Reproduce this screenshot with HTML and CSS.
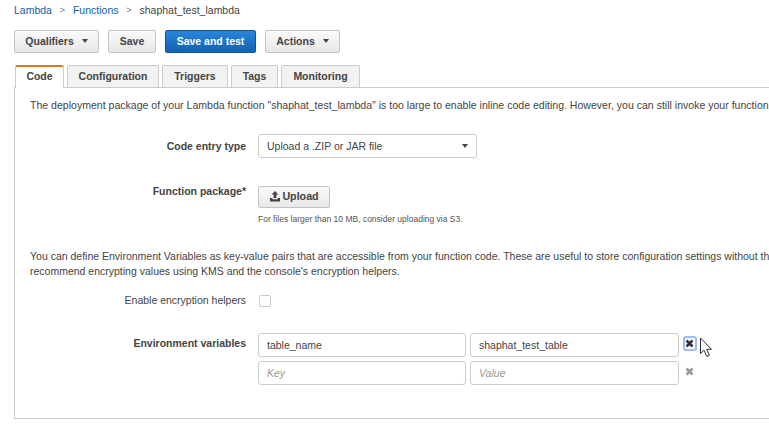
FILE: index.html
```html
<!DOCTYPE html>
<html>
<head>
    <meta charset="UTF-8">
    <title>shaphat_test_lambda</title>
    <link rel="stylesheet" href="styles.css">
</head>
<body>
    <div class="breadcrumb">
        <a href="#">Lambda</a>
        <span class="sep">&gt;</span>
        <a href="#">Functions</a>
        <span class="sep">&gt;</span>
        <span>shaphat_test_lambda</span>
    </div>

    <div class="toolbar">
        <button class="btn btn-qualifiers">Qualifiers <i class="caret"></i></button>
        <button class="btn btn-save">Save</button>
        <button class="btn btn-primary">Save and test</button>
        <button class="btn btn-actions">Actions <i class="caret"></i></button>
    </div>

    <div class="tabs">
        <div class="tab active tab-code">Code</div>
        <div class="tab tab-config">Configuration</div>
        <div class="tab tab-triggers">Triggers</div>
        <div class="tab tab-tags">Tags</div>
        <div class="tab tab-monitoring">Monitoring</div>
    </div>

    <div class="panel">
        <p class="note note-top">The deployment package of your Lambda function "shaphat_test_lambda" is too large to enable inline code editing. However, you can still invoke your function now.</p>

        <div class="row row-entry">
            <label class="label">Code entry type</label>
            <div class="select">
                <span>Upload a .ZIP or JAR file</span>
                <i class="caret"></i>
            </div>
        </div>

        <div class="row row-package">
            <label class="label">Function package*</label>
            <div>
                <button class="btn btn-upload">
                    <svg class="upload-icon" width="12" height="11" viewBox="0 0 12 11"><path d="M6 0 L9.5 3.6 H7.4 V7 H4.6 V3.6 H2.5 Z M1 7 H3.4 V8.2 H8.6 V7 H11 V10.5 H1 Z" fill="#444"/></svg>Upload
                </button>
                <div class="help">For files larger than 10 MB, consider uploading via S3.</div>
            </div>
        </div>

        <p class="note note-env">You can define Environment Variables as key-value pairs that are accessible from your function code. These are useful to store configuration settings without the need to change function code.<br>recommend encrypting values using KMS and the console's encryption helpers.</p>

        <div class="row row-helpers">
            <label class="label label-plain">Enable encryption helpers</label>
            <span class="checkbox"></span>
        </div>

        <div class="row row-env">
            <label class="label">Environment variables</label>
            <div class="env-grid">
                <input class="field" type="text" value="table_name">
                <input class="field" type="text" value="shaphat_test_table">
                <span class="remove focused">
                    <svg width="9" height="9" viewBox="0 0 9 9"><path d="M1.5 1.5 L7.5 7.5 M7.5 1.5 L1.5 7.5" stroke="#333" stroke-width="2.6"/></svg>
                </span>
                <input class="field" type="text" placeholder="Key">
                <input class="field" type="text" placeholder="Value">
                <span class="remove">
                    <svg width="9" height="9" viewBox="0 0 9 9"><path d="M1.5 1.5 L7.5 7.5 M7.5 1.5 L1.5 7.5" stroke="#999" stroke-width="2.6"/></svg>
                </span>
            </div>
        </div>
    </div>

    <!-- mouse pointer caught in the screenshot -->
    <svg class="pointer" width="14" height="21" viewBox="0 0 14 21"><path d="M1.5 1 V16.5 L5 13.2 L7.8 19.5 L10.4 18.3 L7.7 12.3 H12.5 Z" fill="#fff" stroke="#2b3040" stroke-width="1"/></svg>
</body>
</html>
```

FILE: styles.css
```css
html, body {
    height: 433px;
    overflow: hidden;
}

body {
    position: relative;
    margin: 0;
    font-family: "Liberation Sans", Arial, sans-serif;
    font-size: 10.5px;
    color: #444;
    background-color: #fff;
}

/* breadcrumb */
.breadcrumb {
    display: flex;
    align-items: center;
    height: 20px;
    padding-left: 14px;
    line-height: 20px;
    color: #444;
}

.breadcrumb a {
    color: #0f5ea8;
    text-decoration: none;
}

.sep {
    width: 21px;
    text-align: center;
    color: #777;
    font-size: 9px;
}

/* buttons */
.toolbar {
    display: flex;
    gap: 9px;
    margin-top: 10px;
    padding-left: 14px;
}

.btn {
    height: 23px;
    padding: 0 0 2px;
    border: 1px solid #c3c3c3;
    border-radius: 2px;
    background: linear-gradient(#fafafa, #e8e8e8);
    font-family: inherit;
    font-size: 10.5px;
    font-weight: bold;
    color: #444;
}

.btn-qualifiers { width: 85px; }
.btn-save { width: 48px; }
.btn-actions { width: 75px; }

.btn-primary {
    width: 91px;
    border-color: #15508f;
    background: linear-gradient(#2a86dc, #0f62b4);
    color: #fff;
}

.caret {
    display: inline-block;
    width: 0;
    height: 0;
    margin-left: 5px;
    border-left: 3.5px solid transparent;
    border-right: 3.5px solid transparent;
    border-top: 4px solid #444;
    vertical-align: 2px;
}

/* tabs */
.tabs {
    display: flex;
    gap: 3px;
    margin-top: 12px;
    padding-left: 15px;
}

.tab {
    height: 22px;
    box-sizing: border-box;
    border: 1px solid #ccc;
    border-bottom: none;
    border-radius: 2px 2px 0 0;
    background-color: #f2f2f2;
    text-align: center;
    font-weight: bold;
    line-height: 20px;
    color: #444;
}

.tab.active {
    position: relative;
    z-index: 1;
    margin-bottom: -1px;
    height: 23px;
    border-top: 2px solid #e47911;
    background-color: #fff;
    line-height: 19px;
}

.tab-code { width: 49px; }
.tab-config { width: 92px; }
.tab-triggers { width: 66px; }
.tab-tags { width: 47px; }
.tab-monitoring { width: 79px; }

/* main panel */
.panel {
    box-sizing: border-box;
    width: 800px;
    height: 332px;
    margin-left: 14px;
    border: 1px solid #ccc;
    padding: 0 15px;
}

.note {
    margin: 0;
    line-height: 15px;
    white-space: nowrap;
}

.note-top { padding-top: 10px; font-size: 10.55px; }
.note-env { padding-top: 24px; }

.row {
    display: flex;
    align-items: flex-start;
}

.label {
    flex: none;
    width: 228px;
    padding-right: 12px;
    box-sizing: border-box;
    text-align: right;
    font-weight: bold;
}

.label-plain { font-weight: normal; }

.row-entry { margin-top: 21px; }
.row-entry .label { line-height: 24px; }

.select {
    display: flex;
    align-items: center;
    justify-content: space-between;
    box-sizing: border-box;
    width: 219px;
    height: 24px;
    padding: 0 8px;
    border: 1px solid #ccc;
    border-radius: 3px;
}

.row-package { margin-top: 28px; }
.row-package .label { line-height: 11px; }

.btn-upload {
    display: flex;
    align-items: center;
    justify-content: center;
    width: 72px;
    height: 22px;
    font-size: 10.7px;
}

.upload-icon { margin-right: 1px; }

.help {
    margin-top: 5px;
    font-size: 8.5px;
    line-height: 12px;
    color: #555;
}

.row-helpers { margin-top: 14px; }
.row-helpers .label { line-height: 14px; }

.checkbox {
    width: 10px;
    height: 10px;
    margin: 2px 0 0 1px;
    border: 1px solid #ccc;
    border-radius: 2px;
}

.row-env { margin-top: 26px; }
.row-env .label { padding-top: 3px; line-height: 14px; }

.env-grid {
    display: grid;
    grid-template-columns: 208px 209px 18px;
    grid-auto-rows: 24px;
    gap: 4px;
}

.field {
    box-sizing: border-box;
    width: 100%;
    height: 24px;
    padding: 0 8px;
    border: 1px solid #ccc;
    border-radius: 3px;
    font-family: inherit;
    font-size: 10.5px;
    color: #444;
}

.field::placeholder {
    font-style: italic;
    color: #999;
}

.remove {
    display: flex;
    align-items: center;
    justify-content: center;
    width: 14px;
    height: 15px;
    box-sizing: border-box;
    margin-top: 3px;
    padding-right: 1px;
}

.remove.focused {
    border: 2px solid #9dbdf6;
    border-radius: 3px;
}

.pointer {
    position: absolute;
    left: 699px;
    top: 337px;
}
```
